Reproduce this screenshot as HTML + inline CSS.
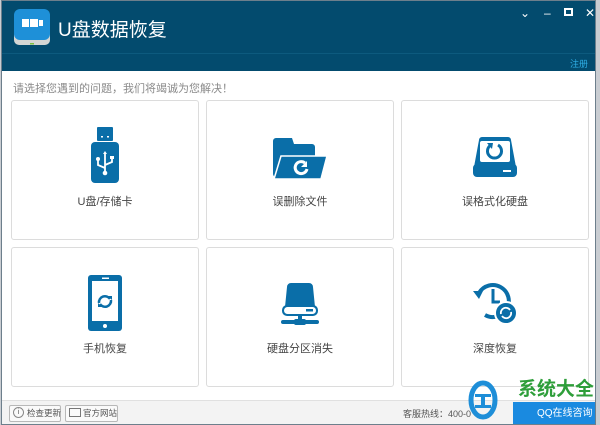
<!DOCTYPE html>
<html><head><meta charset="utf-8">
<style>
*{margin:0;padding:0;box-sizing:border-box}
html,body{width:600px;height:425px;overflow:hidden}
body{background:#c9cdd2;font-family:"Liberation Sans","Noto Sans CJK SC",sans-serif;position:relative}
.win{position:absolute;left:1px;top:0;width:595px;height:425px;background:#fff;border:1px solid #6d7f8c;overflow:hidden}
.title{position:absolute;left:0;top:0;width:100%;height:70px;background:#034b6e}
.title .line{position:absolute;left:0;top:52px;width:100%;height:1px;background:#0d5a7e}
.logo{position:absolute;left:11px;top:7px;width:38px;height:38px}
.tname{position:absolute;left:56px;top:14px;color:#fff;font-size:19px;white-space:nowrap}
.reg{position:absolute;right:7px;top:56px;color:#2fb0e8;font-size:9px}
.ctl{position:absolute;top:5px;color:#fff;font-size:12px}
.hint{position:absolute;left:11px;top:79px;color:#8a8a8a;font-size:11px;white-space:nowrap}
.card{position:absolute;width:188px;height:140px;border:1px solid #dcdcdc;border-radius:3px;background:#fff}
.card svg{position:absolute;left:50%;transform:translateX(-50%)}
.card .lb{position:absolute;left:0;width:100%;text-align:center;top:92px;font-size:11px;color:#444}
.foot{position:absolute;left:0;top:399px;width:100%;height:26px;background:#f3f3f3;border-top:1px solid #e0e0e0}
.btn{position:absolute;top:4px;height:17px;border:1px solid #b8b8b8;border-radius:2px;background:#fafafa;font-size:8.5px;color:#555;line-height:15px;padding-left:17px;white-space:nowrap}
</style></head><body>
<div class="win">
 <div class="title">
  <div class="line"></div>
  <svg class="logo" viewBox="0 0 38 38"><rect x="1" y="20" width="36" height="17" rx="5" fill="#d4d6d4"/><rect x="1" y="1" width="36" height="31" rx="6" fill="#1e90d8"/><rect x="9" y="11" width="7" height="8" fill="#fff"/><rect x="17" y="11" width="8" height="8" fill="#fff"/><rect x="26" y="12" width="4" height="6" fill="#fff"/><rect x="17" y="35" width="4" height="1.5" fill="#7dc142"/></svg>
  <div class="tname">U盘数据恢复</div>
  <div class="ctl" style="left:518px">&#8964;</div>
  <div class="ctl" style="left:542px">&#8211;</div>
  <div class="ctl" style="left:562px;top:4px;width:9px;height:8px;border:2px solid #fff;margin-top:3px"></div>
  <div class="ctl" style="left:583px">&#10005;</div>
  <div class="reg">注册</div>
 </div>
 <div class="hint">请选择您遇到的问题，我们将竭诚为您解决！</div>

 <div class="card" style="left:9px;top:99px">
  <svg style="top:26px" width="30" height="58" viewBox="0 0 30 58"><rect x="7" y="0" width="16" height="14" rx="1" fill="#0a6ea8"/><rect x="11" y="9" width="2" height="1.5" fill="#fff"/><rect x="17" y="9" width="2" height="1.5" fill="#fff"/><rect x="1" y="15" width="28" height="41" rx="4" fill="#0a6ea8"/><g stroke="#fff" stroke-width="1.8" fill="none"><path d="M15 26v20M8 33v5l7 3M22 31v4l-7 3"/></g><circle cx="15" cy="46" r="2.3" fill="#fff"/><circle cx="8" cy="32" r="2" fill="#fff"/><rect x="20" y="29" width="4" height="3" fill="#fff"/><path d="M13 27l2-3 2 3z" fill="#fff"/></svg>
  <div class="lb">U盘/存储卡</div></div>
 <div class="card" style="left:204px;top:99px">
  <svg style="top:36px" width="58" height="44" viewBox="0 0 58 44"><path d="M2 4a3 3 0 0 1 3-3h16l2 6h18a3 3 0 0 1 3 3v30H5a3 3 0 0 1-3-3z" fill="#0a6ea8"/><path d="M10 19h46l-6 23H3z" fill="#0a6ea8" stroke="#fff" stroke-width="1.5"/><path d="M34 26a6 6 0 1 0 2 6" stroke="#fff" stroke-width="3" fill="none"/><path d="M36 24v6h-6z" fill="#fff"/></svg>
  <div class="lb">误删除文件</div></div>
 <div class="card" style="left:399px;top:99px">
  <svg style="top:36px" width="44" height="40" viewBox="0 0 44 40"><path d="M6 3a3 3 0 0 1 3-3h26a3 3 0 0 1 3 3l5 27H1z" fill="#0a6ea8"/><rect x="0" y="27" width="44" height="13" rx="4" fill="#0a6ea8"/><rect x="7" y="4" width="30" height="21" rx="2" fill="#fff"/><path d="M18 8a7 7 0 1 0 7 0" stroke="#0a6ea8" stroke-width="3" fill="none"/><path d="M14 6l6 0-1 6z" fill="#0a6ea8"/><rect x="30" y="33" width="8" height="2" fill="#fff"/></svg>
  <div class="lb">误格式化硬盘</div></div>

 <div class="card" style="left:9px;top:246px">
  <svg style="top:27px" width="34" height="56" viewBox="0 0 34 56"><rect x="0" y="0" width="34" height="56" rx="3" fill="#0a6ea8"/><rect x="4" y="6" width="26" height="40" fill="#fff"/><rect x="14" y="2.5" width="7" height="1.5" fill="#fff"/><circle cx="17" cy="51" r="2" fill="#fff"/><path d="M11 28a6 6 0 0 1 11-4M23 25a6 6 0 0 1-11 4" stroke="#0a6ea8" stroke-width="2.5" fill="none"/><path d="M20 21h4v4zM14 32h-4v-4z" fill="#0a6ea8"/></svg>
  <div class="lb">手机恢复</div></div>
 <div class="card" style="left:204px;top:246px">
  <svg style="top:35px" width="38" height="44" viewBox="0 0 38 44"><path d="M6 4a4 4 0 0 1 4-4h18a4 4 0 0 1 4 4l2 20H4z" fill="#0a6ea8"/><rect x="1" y="22" width="36" height="11" rx="5" fill="#0a6ea8"/><rect x="3" y="24" width="32" height="7" rx="3.5" fill="#fff"/><rect x="25" y="26" width="7" height="2.5" fill="#0a6ea8"/><rect x="17" y="33" width="4" height="5" fill="#0a6ea8"/><rect x="0" y="37" width="38" height="4" rx="2" fill="#0a6ea8"/><rect x="13" y="36" width="12" height="6" rx="2" fill="#0a6ea8"/></svg>
  <div class="lb">硬盘分区消失</div></div>
 <div class="card" style="left:399px;top:246px">
  <svg style="top:31px" width="46" height="46" viewBox="0 0 46 46"><path d="M7 14a16 16 0 1 1 6 22" stroke="#0a6ea8" stroke-width="4" fill="none"/><path d="M1 12l10 0-4 8z" fill="#0a6ea8"/><path d="M21 10v13h7" stroke="#0a6ea8" stroke-width="3" fill="none"/><circle cx="34" cy="34" r="11" fill="#0a6ea8" stroke="#fff" stroke-width="2"/><path d="M29 35a5 5 0 0 1 9-4M39 33a5 5 0 0 1-9 4" stroke="#fff" stroke-width="1.8" fill="none"/></svg>
  <div class="lb">深度恢复</div></div>

 <div class="foot">
  <div class="btn" style="left:7px;width:52px"><span style="position:absolute;left:3px;top:1px;width:11px;height:11px;border:1px solid #888;border-radius:50%;font-size:7px;line-height:9px;text-align:center">i</span>检查更新</div>
  <div class="btn" style="left:63px;width:53px"><span style="position:absolute;left:3px;top:2px;width:12px;height:9px;border:1px solid #777"></span>官方网站</div>
  <div style="position:absolute;left:401px;top:6px;font-size:9px;color:#555;white-space:nowrap">客服热线：400-0</div>
  <div style="position:absolute;left:511px;top:1px;width:85px;height:23px;background:#1a8ae0;color:#fff;font-size:10px;line-height:23px;padding-left:24px;white-space:nowrap">QQ在线咨询</div>
 </div>
 <svg style="position:absolute;left:466px;top:378px" width="30" height="42" viewBox="0 0 30 42"><ellipse cx="15" cy="21" rx="12" ry="17" fill="none" stroke="#1e8ed8" stroke-width="5"/><rect x="7" y="15" width="16" height="3" fill="#1e8ed8"/><rect x="7" y="26" width="16" height="3" fill="#1e8ed8"/><rect x="13" y="15" width="4" height="14" fill="#1e8ed8"/></svg>
 <div style="position:absolute;left:516px;top:378px;font-size:19px;line-height:22px;font-weight:bold;color:#2e9e3a;white-space:nowrap">系统大全</div>
</div>
</body></html>
